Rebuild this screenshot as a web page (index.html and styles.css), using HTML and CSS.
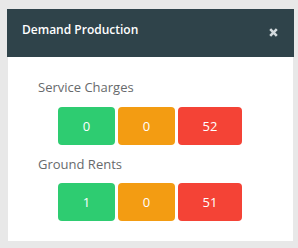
FILE: index.html
```html
<!DOCTYPE html>
<html>
<head>
<meta charset="utf-8">
<link rel="stylesheet" href="styles.css">
</head>
<body>
<div class="panel">
  <div class="header">
    <div class="title">Demand Production</div>
    <svg class="close" width="9" height="9" viewBox="0 0 9 9"><path d="M1.2 1.2 L7.8 7.8 M7.8 1.2 L1.2 7.8" stroke="#d3dadd" stroke-width="2.6" stroke-linecap="butt"/></svg>
  </div>
  <div class="content">
    <div class="section">
      <div class="label">Service Charges</div>
      <div class="buttons">
        <div class="btn green">0</div>
        <div class="btn orange">0</div>
        <div class="btn red">52</div>
      </div>
    </div>
    <div class="section">
      <div class="label">Ground Rents</div>
      <div class="buttons">
        <div class="btn green">1</div>
        <div class="btn orange">0</div>
        <div class="btn red">51</div>
      </div>
    </div>
  </div>
</div>
</body>
</html>
```
FILE: styles.css
```css
html, body {
  margin: 0;
  padding: 0;
}
body {
  background: #e8e8e8;
  font-family: "Open Sans", "Liberation Sans", sans-serif;
  padding: 9px 4px 7px 7px;
  width: 287px;
}
.panel {
  width: 287px;
}
.header {
  height: 48px;
  box-sizing: border-box;
  background: #2f434a;
  padding: 12px 16px 0 15px;
  display: flex;
  justify-content: space-between;
  align-items: flex-start;
}
.title {
  color: #ffffff;
  font-size: 12px;
  font-weight: 600;
  line-height: 18px;
}
.close {
  display: block;
  margin-top: 7px;
}
.content {
  background: #ffffff;
  margin: 0 1px;
  padding: 21px 0 20px 30px;
}
.section + .section {
  margin-top: 10px;
}
.label {
  color: #676a6c;
  font-size: 13px;
  line-height: 18px;
  margin-bottom: 11px;
}
.section + .section .label {
  margin-bottom: 10px;
}
.buttons {
  display: flex;
  gap: 3px;
  padding-left: 20px;
}
.btn {
  width: 57px;
  height: 38px;
  border-radius: 4px;
  color: #ffffff;
  font-size: 13px;
  display: flex;
  align-items: center;
  justify-content: center;
}
.btn.red {
  width: 64px;
  background: #f44336;
}
.green { background: #2ecc71; }
.orange { background: #f39c12; }
```
